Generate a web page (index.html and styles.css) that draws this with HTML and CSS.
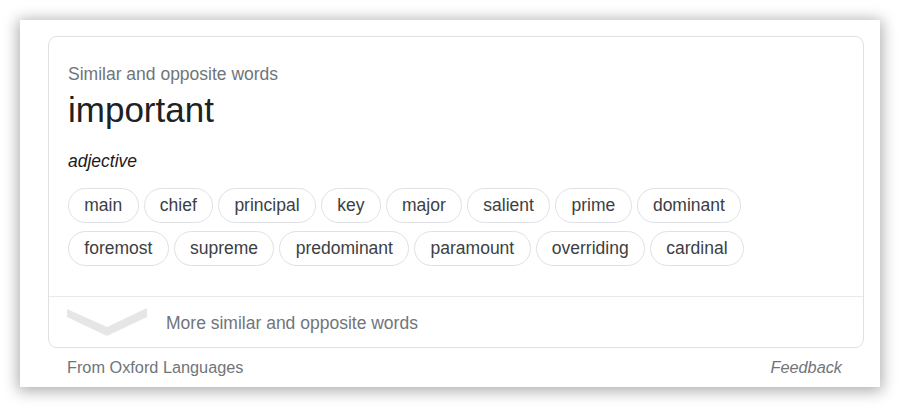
FILE: index.html
```html
<!DOCTYPE html>
<html>
<head>
<meta charset="utf-8">
<link rel="stylesheet" href="styles.css">
</head>
<body>
<div class="window">
  <div class="card">
    <div class="body">
      <div class="subtitle">Similar and opposite words</div>
      <div class="title">important</div>
      <div class="pos">adjective</div>
      <div class="chips">
        <span class="chip">main</span>
        <span class="chip">chief</span>
        <span class="chip">principal</span>
        <span class="chip">key</span>
        <span class="chip">major</span>
        <span class="chip">salient</span>
        <span class="chip">prime</span>
        <span class="chip">dominant</span>
        <span class="chip">foremost</span>
        <span class="chip">supreme</span>
        <span class="chip">predominant</span>
        <span class="chip">paramount</span>
        <span class="chip">overriding</span>
        <span class="chip">cardinal</span>
      </div>
    </div>
    <div class="more">
      <svg class="chev" width="80" height="29" viewBox="0 0 80 29"><polygon points="0,1 40,19 80,0 80,9 40,28 0,9" fill="#e6e6e6"/></svg>
      <span class="more-text">More similar and opposite words</span>
    </div>
  </div>
  <div class="footer">
    <span>From Oxford Languages</span>
    <span class="feedback">Feedback</span>
  </div>
</div>
</body>
</html>
```
FILE: styles.css
```css
html, body {
  margin: 0;
  padding: 0;
  background: #fff;
}
body {
  padding: 20px;
  font-family: "Liberation Sans", Arial, sans-serif;
}
.window {
  width: 860px;
  height: 367px;
  box-sizing: border-box;
  background: #fff;
  padding: 16px 16px 0 28px;
  box-shadow: 0 2px 14px 2px rgba(0, 0, 0, 0.33);
  display: flex;
  flex-direction: column;
}
.card {
  border: 1px solid #dfe1e5;
  border-radius: 9px;
  height: 312px;
  box-sizing: border-box;
  display: flex;
  flex-direction: column;
}
.body {
  padding: 27px 19px 0;
  height: 259px;
  box-sizing: border-box;
}
.subtitle {
  font-size: 17.5px;
  line-height: 20px;
  color: #70757a;
}
.title {
  font-size: 35px;
  line-height: 40px;
  margin-top: 6px;
  color: #202124;
}
.pos {
  font-size: 17.5px;
  line-height: 20px;
  font-style: italic;
  color: #1a1a1a;
  margin-top: 21px;
}
.chips {
  display: flex;
  flex-wrap: wrap;
  gap: 8px 5px;
  margin-top: 17px;
  margin-right: 30px;
}
.chip {
  font-size: 17.5px;
  line-height: 33px;
  padding: 0 15.3px;
  border: 1px solid #dfe1e5;
  border-radius: 18px;
  color: #3c4043;
}
.more {
  border-top: 1px solid #e8eaed;
  flex: 1;
  display: flex;
  align-items: center;
  padding-left: 18px;
}
.chev {
  display: block;
  margin-top: 1px;
}
.more-text {
  margin-left: 19px;
  margin-top: 3px;
  font-size: 17.5px;
  color: #70757a;
}
.footer {
  flex: 1;
  display: flex;
  justify-content: space-between;
  align-items: center;
  margin-left: -28px;
  margin-right: -16px;
  padding-left: 47px;
  padding-right: 38px;
  padding-top: 0;
  font-size: 16.3px;
  color: #70757a;
}
.feedback {
  font-style: italic;
}
```
